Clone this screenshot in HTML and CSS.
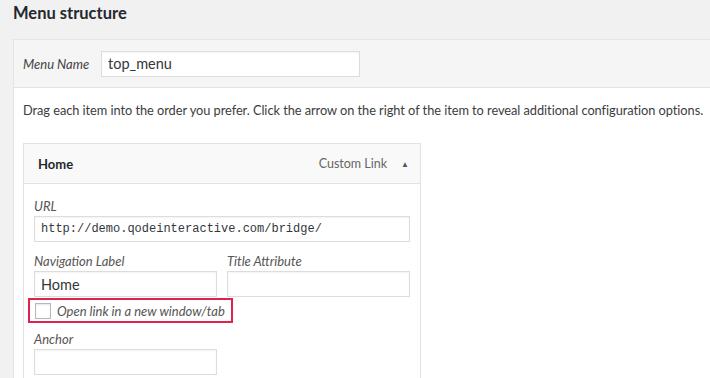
FILE: index.html
```html
<!DOCTYPE html>
<html lang="en">

<head>
    <meta charset="UTF-8">
    <title>Menu structure</title>
    <link rel="stylesheet" href="styles.css">
</head>

<body>
    <h2 class="page-title">Menu structure</h2>
    <div class="menu-panel">
        <div class="panel-header">
            <label class="menu-name-label" for="menu-name">Menu Name</label>
            <input type="text" id="menu-name" class="menu-name-input" value="top_menu">
        </div>
        <div class="panel-body">
            <p class="drag-hint">Drag each item into the order you prefer. Click the arrow on the right of the item to reveal additional configuration options.</p>
            <div class="menu-item">
                <div class="item-bar">
                    <span class="item-title">Home</span>
                    <span class="item-type">Custom Link</span>
                    <span class="item-arrow">&#9650;</span>
                </div>
                <div class="item-settings">
                    <label class="field field-wide">
                        <span class="field-label">URL</span>
                        <input type="text" class="field-input mono" value="http://demo.qodeinteractive.com/bridge/">
                    </label>
                    <div class="field-row">
                        <label class="field">
                            <span class="field-label">Navigation Label</span>
                            <input type="text" class="field-input" value="Home">
                        </label>
                        <label class="field">
                            <span class="field-label">Title Attribute</span>
                            <input type="text" class="field-input">
                        </label>
                    </div>
                    <div class="highlight">
                        <label class="check">
                            <span class="check-box"></span>
                            <span class="check-text">Open link in a new window/tab</span>
                        </label>
                    </div>
                    <label class="field">
                        <span class="field-label">Anchor</span>
                        <input type="text" class="field-input">
                    </label>
                </div>
            </div>
        </div>
    </div>
</body>

</html>
```

FILE: styles.css
```css
body {
    margin: 0;
    padding: 0 0 0 13px;
    background-color: #f1f1f1;
    font-family: Lato, "Open Sans", Arial, sans-serif;
    font-size: 13px;
    color: #23282d;
    overflow: hidden;
}

.page-title {
    margin: 0;
    padding-top: 3px;
    height: 36px;
    font-size: 16.5px;
    font-weight: 700;
    color: #23282d;
}

.menu-panel {
    border: 1px solid #e5e5e5;
    border-right: none;
    background-color: #fff;
}

.panel-header {
    display: flex;
    align-items: center;
    height: 47px;
    padding-left: 9px;
    background-color: #f5f5f5;
    border-bottom: 1px solid #e2e2e2;
}

.menu-name-label {
    font-style: italic;
    color: #444;
    width: 78px;
}

.menu-name-input {
    width: 259px;
    height: 26px;
    box-sizing: border-box;
    padding: 0 6px;
    border: 1px solid #dddddd;
    font-family: inherit;
    font-size: 14.5px;
    color: #32373c;
    box-shadow: inset 0 1px 2px rgba(0, 0, 0, 0.05);
}

.panel-body {
    padding: 0 0 0 9px;
}

.drag-hint {
    margin: 14px 0 25px;
    font-size: 12.8px;
    letter-spacing: -0.05px;
    color: #3c3c3c;
    white-space: nowrap;
}

.menu-item {
    width: 396px;
    border: 1px solid #e2e2e2;
}

.item-bar {
    display: flex;
    align-items: center;
    height: 39px;
    padding: 0 11px 0 14px;
    background-color: #f9f9f9;
    border-bottom: 1px solid #e2e2e2;
}

.item-title {
    flex-grow: 1;
    font-weight: 700;
}

.item-type {
    color: #666;
    font-size: 12.5px;
    margin-right: 14px;
}

.item-arrow {
    font-size: 8px;
    color: #555;
}

.item-settings {
    padding: 13px 10px 4px;
}

.field {
    display: flex;
    flex-direction: column;
    width: 183px;
}

.field-wide {
    width: 376px;
}

.field-label {
    font-style: italic;
    color: #555;
    line-height: 19px;
}

.field-input {
    height: 26px;
    box-sizing: border-box;
    padding: 0 6px;
    border: 1px solid #ddd;
    font-family: inherit;
    font-size: 14.5px;
    color: #32373c;
    box-shadow: inset 0 1px 2px rgba(0, 0, 0, 0.05);
}

.mono {
    font-family: "Liberation Mono", monospace;
    font-size: 12px;
}

.field-row {
    display: flex;
    gap: 10px;
    margin-top: 10px;
}

.highlight {
    display: inline-block;
    margin: 1px 0 7px -6px;
    padding: 3px 6px 2px 5px;
    border: 2px solid #e0224f;
}

.check {
    display: flex;
    align-items: center;
    gap: 6px;
}

.check-box {
    width: 14px;
    height: 14px;
    border: 1px solid #b4b9be;
    background-color: #fff;
    box-shadow: inset 0 1px 2px rgba(0, 0, 0, 0.1);
}

.check-text {
    font-style: italic;
    color: #555;
}
```
